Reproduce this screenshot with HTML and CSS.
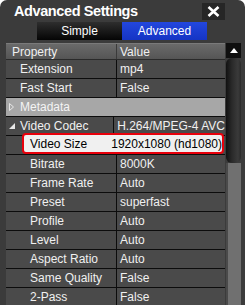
FILE: index.html
```html
<!DOCTYPE html>
<html lang="en">

<head>
  <meta charset="UTF-8">
  <title>Advanced Settings</title>
  <link rel="stylesheet" href="styles.css">
</head>

<body>
  <div class="window">
    <div class="titlebar">
      <h3 class="title">Advanced Settings</h3>
      <div class="close">
        <svg width="13" height="11" viewBox="0 0 13 11">
          <path d="M1.5 1 L11.5 10 M11.5 1 L1.5 10" stroke="#fff" stroke-width="2.6" />
        </svg>
      </div>
    </div>

    <div class="tabs">
      <div class="tab simple">Simple</div>
      <div class="tab active">Advanced</div>
    </div>

    <div class="panel">
      <div class="grid">
        <div class="row head">
          <div class="prop">Property</div>
          <div class="val">Value</div>
        </div>
        <div class="row">
          <div class="prop lvl1">Extension</div>
          <div class="val">mp4</div>
        </div>
        <div class="row">
          <div class="prop lvl1">Fast Start</div>
          <div class="val">False</div>
        </div>
        <div class="row group">
          <div class="prop lvl1"><span class="arrow closed"></span>Metadata</div>
        </div>
        <div class="row">
          <div class="prop lvl1"><span class="arrow open"></span>Video Codec</div>
          <div class="val">H.264/MPEG-4 AVC</div>
        </div>
        <div class="row selrow">
          <div class="sel">
            <div class="prop">Video Size</div>
            <div class="val">1920x1080 (hd1080)</div>
          </div>
        </div>
        <div class="row">
          <div class="prop lvl2">Bitrate</div>
          <div class="val">8000K</div>
        </div>
        <div class="row">
          <div class="prop lvl2">Frame Rate</div>
          <div class="val">Auto</div>
        </div>
        <div class="row">
          <div class="prop lvl2">Preset</div>
          <div class="val">superfast</div>
        </div>
        <div class="row">
          <div class="prop lvl2">Profile</div>
          <div class="val">Auto</div>
        </div>
        <div class="row">
          <div class="prop lvl2">Level</div>
          <div class="val">Auto</div>
        </div>
        <div class="row">
          <div class="prop lvl2">Aspect Ratio</div>
          <div class="val">Auto</div>
        </div>
        <div class="row">
          <div class="prop lvl2">Same Quality</div>
          <div class="val">False</div>
        </div>
        <div class="row">
          <div class="prop lvl2">2-Pass</div>
          <div class="val">False</div>
        </div>
      </div>

      <div class="scroll">
        <div class="up">
          <svg width="8" height="5" viewBox="0 0 8 5">
            <path d="M0 5 L4 0 L8 5 Z" fill="#fff" />
          </svg>
        </div>
        <div class="thumb"></div>
        <div class="track"></div>
      </div>
    </div>
  </div>
</body>

</html>
```

FILE: styles.css
```css
* {
  margin: 0;
  padding: 0;
  box-sizing: border-box;
}

body {
  background: #fff;
  font-family: "Liberation Sans", Arial, sans-serif;
  font-size: 12px;
  color: #f0f0f0;
  overflow: hidden;
}

.window {
  width: 245px;
  height: 305px;
  background: #3b3b3b;
  border-radius: 7px 7px 0 0;
  overflow: hidden;
}

.titlebar {
  height: 22px;
  display: flex;
  align-items: flex-start;
  justify-content: space-between;
}

.title {
  font-size: 14.5px;
  font-weight: bold;
  letter-spacing: -0.4px;
  color: #fff;
  padding: 3px 0 0 14px;
}

.close {
  width: 23px;
  height: 17px;
  margin: 3px 20px 0 0;
  background: #262626;
  display: flex;
  justify-content: center;
  align-items: center;
}

.tabs {
  display: flex;
  margin-left: 37px;
  height: 18px;
}

.tab {
  width: 85px;
  display: flex;
  justify-content: center;
  align-items: center;
  color: #fff;
  font-size: 12px;
}

.simple {
  background: linear-gradient(to bottom, #2e2e2e, #050505);
}

.active {
  background: linear-gradient(to bottom, #2347de, #1534c4);
}

.panel {
  display: flex;
  margin: 3px 0 0 6px;
}

.grid {
  width: 219px;
}

.row {
  display: flex;
  height: 19px;
  background: #4a4a4a;
  border-bottom: 1px solid #0c0c0c;
  align-items: center;
}

.row.head {
  height: 17px;
  background: linear-gradient(to bottom, #6a6a6a, #555);
  border-top: 1px solid #7a7a7a;
  border-bottom: 1px solid #2a2a2a;
}

.prop {
  width: 111px;
  height: 100%;
  display: flex;
  align-items: center;
  padding-left: 6px;
  border-right: 1px solid #0c0c0c;
  white-space: nowrap;
}

.head .prop {
  border-right: 1px solid #3a3a3a;
}

.val {
  padding-left: 3px;
  white-space: nowrap;
}

.lvl1 {
  padding-left: 14px;
}

.lvl2 {
  padding-left: 24px;
}

.row.group {
  background: #a7a7a7;
}

.group .prop {
  border-right: none;
  color: #f4f4f4;
}

.arrow {
  width: 11px;
  margin-left: -11px;
  display: inline-block;
  height: 8px;
}

.arrow.closed {
  background: no-repeat 0 0 / 5px 8px;
  background-image: url("data:image/svg+xml,%3Csvg xmlns='http://www.w3.org/2000/svg' width='5' height='8'%3E%3Cpath d='M0.5 0.5 L4.5 4 L0.5 7.5 Z' fill='none' stroke='%23e6e6e6'/%3E%3C/svg%3E");
}

.arrow.open {
  background: no-repeat 0 1px / 6px 6px;
  background-image: url("data:image/svg+xml,%3Csvg xmlns='http://www.w3.org/2000/svg' width='6' height='6'%3E%3Cpath d='M6 0 L6 6 L0 6 Z' fill='%23e6e6e6'/%3E%3C/svg%3E");
}

.selrow {
  padding-left: 16px;
  border-bottom: 1px solid #0c0c0c;
}

.sel {
  display: flex;
  align-items: center;
  width: 202px;
  height: 21px;
  margin-top: -3px;
  background: #f0f0f0;
  border: 2px solid #e8000b;
  border-radius: 4px;
  color: #000;
}

.sel .prop {
  width: 94px;
  padding-left: 6px;
  border-right: none;
}

.sel .val {
  padding-left: 2px;
}

.scroll {
  width: 15px;
  margin-left: 1px;
  display: flex;
  flex-direction: column;
  height: 262px;
}

.up {
  height: 15px;
  background: #0f0f0f;
  display: flex;
  justify-content: center;
  align-items: center;
}

.thumb {
  height: 105px;
  border-radius: 6px;
  background: linear-gradient(to right, #111, #2a2a2a 40%, #3a3a3a 80%, #2a2a2a);
}

.track {
  flex: 1;
  background: linear-gradient(to right, #4a4a4a 0, #4a4a4a 2px, #707070 2px);
}
```
